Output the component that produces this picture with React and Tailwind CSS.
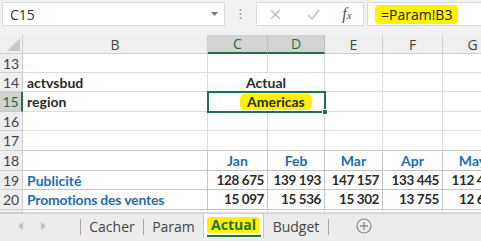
import React from "react";

const COLS = [23, 185, 60, 57, 58, 60, 60];
const GRID = "border-r border-b border-[#dcdcdc]";
const TABLE = "border-r border-b border-[#c3c3c3]";
const ABOVE_TABLE = "border-r border-b border-r-[#dcdcdc] border-b-[#c3c3c3]";

function RowHead({ n, active, h }) {
  return (
    <div
      className={`w-[23px] shrink-0 flex items-center justify-center text-[14px] border-b ${
        active
          ? "bg-[#d2d2d2] text-[#217346] border-r-2 border-r-[#217346] border-b-[#c8c8c8]"
          : "bg-[#efefef] text-[#444] border-r border-[#cfcfcf]"
      }`}
      style={{ height: h }}
    >
      {n}
    </div>
  );
}

function Blank({ w, cls = GRID }) {
  return <div className={`shrink-0 ${cls}`} style={{ width: w }} />;
}

function Num({ w, v }) {
  return (
    <div
      className={`shrink-0 flex items-center justify-end pr-[3px] whitespace-nowrap overflow-hidden text-[13.5px] tracking-[-0.4px] font-bold text-[#2b2b2b] ${TABLE}`}
      style={{ width: w }}
    >
      {v}
    </div>
  );
}

export default function App() {
  const months = ["Jan", "Feb", "Mar", "Apr", "May"];
  const pub = ["128 675", "139 193", "147 157", "133 445", "112 462"];
  const promo = ["15 097", "15 536", "15 302", "13 755", "12 641"];

  return (
    <div className="w-[481px] h-[241px] overflow-hidden bg-white flex flex-col font-['Open_Sans',sans-serif]">
      {/* formula bar */}
      <div className="h-[35px] shrink-0 bg-[#f1f1f1] flex items-start pt-[2px]">
        <div className="ml-[2px] w-[223px] h-[24px] bg-white border border-[#dadada] flex items-center justify-between pl-[7px] pr-[6px]">
          <span className="text-[14px] text-[#333]">C15</span>
          <svg width="7" height="4" viewBox="0 0 7 4">
            <path d="M0 0h7L3.5 4z" fill="#7a7a7a" />
          </svg>
        </div>
        <div className="w-[31px] h-[24px] flex items-center justify-center">
          <svg width="3" height="12" viewBox="0 0 3 12">
            <circle cx="1.5" cy="2" r="1" fill="#9a9a9a" />
            <circle cx="1.5" cy="6" r="1" fill="#9a9a9a" />
            <circle cx="1.5" cy="10" r="1" fill="#9a9a9a" />
          </svg>
        </div>
        <div className="w-[108px] h-[24px] bg-white border border-[#dadada] flex items-center">
          <div className="w-[36px] flex justify-center">
            <svg width="11" height="11" viewBox="0 0 11 11">
              <path d="M1 1l9 9M10 1l-9 9" stroke="#b8b8b8" strokeWidth="1.2" />
            </svg>
          </div>
          <div className="w-[40px] flex justify-center">
            <svg width="13" height="11" viewBox="0 0 13 11">
              <path d="M1 6l4 4 7-9" stroke="#b8b8b8" strokeWidth="1.3" fill="none" />
            </svg>
          </div>
          <div className="flex-1 flex justify-center pr-[2px]">
            <span className="font-['Liberation_Serif',serif] italic text-[16px] text-[#555] leading-none">
              f<span className="text-[11px]">x</span>
            </span>
          </div>
        </div>
        <div className="ml-[3px] flex-1 h-[24px] bg-white border border-[#dadada] border-r-0 flex items-center pl-[7px]">
          <span className="bg-[#fff200] rounded-[4px] px-[6px] text-[14px] leading-[19px] text-[#222]">
            =Param!B3
          </span>
        </div>
      </div>

      {/* column headers */}
      <div className="h-[19px] shrink-0 flex text-[14px] text-[#444]">
        <div className="w-[23px] shrink-0 bg-[#efefef] border-r border-b border-[#cfcfcf] flex items-end justify-end p-[2px]">
          <svg width="13" height="13" viewBox="0 0 13 13">
            <path d="M13 0v13H0z" fill="#c9c9c9" />
          </svg>
        </div>
        {["B", "C", "D", "E", "F", "G"].map((c, i) => {
          const sel = c === "C" || c === "D";
          return (
            <div
              key={c}
              className={`shrink-0 flex items-center justify-center border-r ${
                sel
                  ? "bg-[#d3d3d3] text-[#217346] border-b-2 border-b-[#217346] border-r-[#bdbdbd]"
                  : "bg-[#efefef] border-b border-[#cfcfcf]"
              }`}
              style={{ width: COLS[i + 1] }}
            >
              {c}
            </div>
          );
        })}
      </div>

      {/* rows */}
      <div className="flex flex-col text-[14px] font-['Lato',sans-serif]">
        <div className="flex h-[19px]">
          <RowHead n="13" h={19} />
          {COLS.slice(1).map((w, i) => <Blank key={i} w={w} />)}
        </div>

        <div className="flex h-[19px]">
          <RowHead n="14" h={19} />
          <div className={`w-[185px] shrink-0 flex items-center pl-[4px] font-bold text-[#2b2b2b] ${GRID}`}>actvsbud</div>
          <div className={`w-[117px] shrink-0 flex items-center justify-center font-bold text-[#2b2b2b] ${GRID}`}>Actual</div>
          {COLS.slice(4).map((w, i) => <Blank key={i} w={w} />)}
        </div>

        <div className="flex h-[20px]">
          <RowHead n="15" h={20} active />
          <div className={`w-[185px] shrink-0 flex items-center pl-[4px] font-bold text-[#2b2b2b] ${GRID}`}>region</div>
          <div className={`relative w-[117px] shrink-0 flex items-center pl-[32px] font-bold text-[#2b2b2b] ${GRID}`}>
            <span className="bg-[#fff200] rounded-[5px] px-[7px] leading-[16px]">Americas</span>
            <div className="absolute -left-px -top-px w-[119px] h-[22px] border-2 border-[#217346]" />
            <div className="absolute -right-[4px] -bottom-[4px] w-[6px] h-[6px] bg-[#217346] border border-white" />
          </div>
          {COLS.slice(4).map((w, i) => <Blank key={i} w={w} />)}
        </div>

        <div className="flex h-[19px]">
          <RowHead n="16" h={19} />
          {COLS.slice(1).map((w, i) => <Blank key={i} w={w} />)}
        </div>

        <div className="flex h-[20px]">
          <RowHead n="17" h={20} />
          {COLS.slice(1).map((w, i) => <Blank key={i} w={w} cls={ABOVE_TABLE} />)}
        </div>

        <div className="flex h-[20px]">
          <RowHead n="18" h={20} />
          <Blank w={185} cls={TABLE} />
          {months.map((m, i) => (
            <div
              key={m}
              className={`shrink-0 flex items-center justify-center whitespace-nowrap font-bold text-[#1f6db0] ${TABLE}`}
              style={{ width: COLS[i + 2] }}
            >
              {m}
            </div>
          ))}
        </div>

        <div className="flex h-[19px]">
          <RowHead n="19" h={19} />
          <div className={`w-[185px] shrink-0 flex items-center pl-[4px] font-bold text-[#1f6db0] ${TABLE}`}>Publicité</div>
          {pub.map((v, i) => <Num key={i} w={COLS[i + 2]} v={v} />)}
        </div>

        <div className="flex h-[20px]">
          <RowHead n="20" h={20} />
          <div className={`w-[185px] shrink-0 flex items-center pl-[4px] tracking-[-0.2px] font-bold text-[#1f6db0] ${TABLE}`}>Promotions des ventes</div>
          {promo.map((v, i) => <Num key={i} w={COLS[i + 2]} v={v} />)}
        </div>

        <div className="flex h-[3px] overflow-hidden">
          <RowHead n="" h={3} />
          {COLS.slice(1).map((w, i) => <Blank key={i} w={w} />)}
        </div>
      </div>

      {/* sheet tabs */}
      <div className="flex-1 bg-[#ececec] border-t border-[#d0d0d0] flex items-start text-[14px] text-[#444]">
        <div className="w-[80px] h-[24px] flex items-center pl-[18px] gap-[18px]">
          <svg width="5" height="8" viewBox="0 0 5 8"><path d="M5 0v8L0 4z" fill="#c2c2c2" /></svg>
          <svg width="5" height="8" viewBox="0 0 5 8"><path d="M0 0v8l5-4z" fill="#c2c2c2" /></svg>
        </div>
        <div className="w-px h-[16px] mt-[5px] bg-[#a8a8a8]" />
        <div className="w-[62px] h-[24px] flex items-center justify-center">Cacher</div>
        <div className="w-px h-[16px] mt-[5px] bg-[#a8a8a8]" />
        <div className="w-[59px] h-[24px] flex items-center justify-center">Param</div>
        <div className="w-[61px] h-[24px] bg-white border-x border-[#c8c8c8] flex flex-col items-center">
          <div className="flex-1 flex items-center">
            <span className="bg-[#fff200] rounded-[3px] px-[4px] font-bold text-[#217346] leading-[16px]">Actual</span>
          </div>
          <div className="w-[54px] h-[2px] bg-[#217346] mb-[1px]" />
        </div>
        <div className="w-[64px] h-[24px] flex items-center justify-center">Budget</div>
        <div className="w-px h-[16px] mt-[5px] bg-[#a8a8a8]" />
        <div className="w-[70px] h-[24px] flex items-center justify-center">
          <svg width="16" height="16" viewBox="0 0 16 16">
            <circle cx="8" cy="8" r="7" fill="none" stroke="#8a8a8a" strokeWidth="1.2" />
            <path d="M8 4v8M4 8h8" stroke="#8a8a8a" strokeWidth="1.3" />
          </svg>
        </div>
      </div>
    </div>
  );
}
